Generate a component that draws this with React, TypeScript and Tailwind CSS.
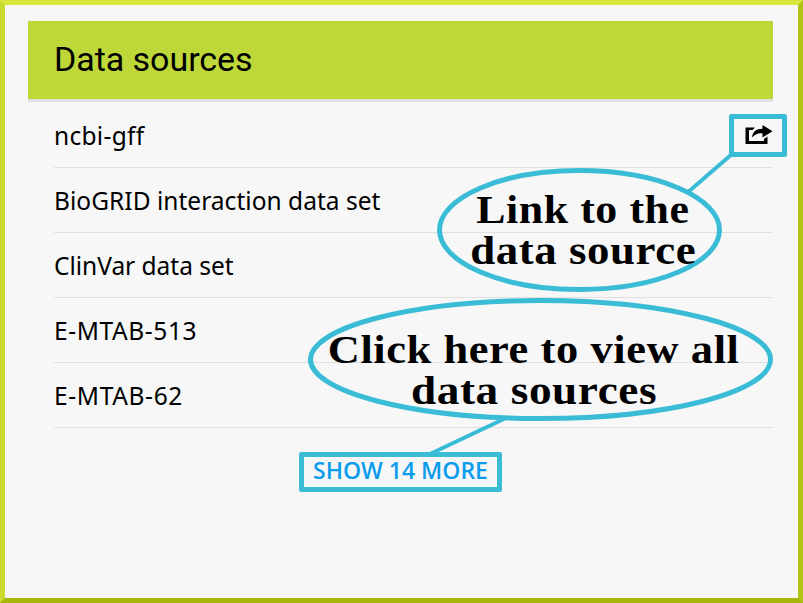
const rows = [
  { name: "ncbi-gff", spacing: "tracking-[0.3px]" },
  { name: "BioGRID interaction data set", spacing: "tracking-[0.03px]" },
  { name: "ClinVar data set", spacing: "tracking-[-0.02px]" },
  { name: "E-MTAB-513", spacing: "tracking-[0.6px]" },
  { name: "E-MTAB-62", spacing: "tracking-[0.65px]" },
];

function ShareIcon() {
  return (
    <svg width="28" height="20" viewBox="0 0 28 20" fill="#000">
      <path d="M0.5 2.5H10L7.5 5H4V16H19V14L22.5 11.5V19H0.5Z" />
      <path d="M7 12.5C7.5 7 11 3.8 17.5 3.8V0L27.5 6.2L17.5 12.5V8.5C13 7.8 10 9.5 7 12.5Z" />
    </svg>
  );
}

export default function App() {
  return (
    <div className="relative h-[603px] w-[803px] overflow-hidden border-5 border-t-[#d9e63d] border-r-[#b1c414] border-b-[#a6b60b] border-l-[#cbdb2e] bg-[#f7f7f7] pt-4 pr-[25px] pl-[23px] text-black">
      <header className="flex h-[81px] items-center border-b-3 border-[#e1e1e1] bg-[#bed83a] pb-0.5 pl-[26px] font-['Roboto',sans-serif] text-[34px] tracking-[-0.05px]">
        <h1>Data sources</h1>
      </header>
      <ul className="ml-[26px] font-['Noto_Sans','Open_Sans',sans-serif] text-[24.5px] font-normal">
        {rows.map((row, i) => (
          <li
            key={row.name}
            className={`flex items-center justify-between border-b border-[#e0e0e0] ${i === 0 ? "h-[66px]" : "h-[65px]"}`}
          >
            <span className={`${i === 0 ? "pt-1" : "pt-0.5"} ${row.spacing}`}>{row.name}</span>
            {i === 0 && (
              <button aria-label="Open data source">
                <ShareIcon />
              </button>
            )}
          </li>
        ))}
      </ul>
      <button className="mt-6 ml-[271px] flex h-10 w-[203px] items-center justify-center rounded-xs border-5 border-[#3bbcd6] pb-1 font-['Open_Sans',sans-serif] text-[23px] font-semibold whitespace-nowrap text-[#0a9ced]">
        SHOW 14 MORE
      </button>

      <svg className="pointer-events-none absolute -top-[5px] -left-[5px]" width="803" height="603" fill="none" stroke="#3bbcd6">
        <line x1="732" y1="154" x2="687" y2="193" strokeWidth="4" />
        <line x1="506" y1="418" x2="430" y2="454" strokeWidth="4" />
        <rect x="731.5" y="116.5" width="53" height="38" strokeWidth="5" strokeLinejoin="round" />
        <ellipse cx="579.5" cy="230" rx="140" ry="59.5" strokeWidth="5" />
        <ellipse cx="540.5" cy="359.5" rx="230" ry="59" strokeWidth="5" />
      </svg>
      <p className="absolute top-[184px] left-[464px] flex w-[228px] flex-col items-center font-['Liberation_Serif',serif] text-[39px] leading-[41px] font-bold whitespace-nowrap">
        <span className="scale-x-[1.125] tracking-[0.5px]">Link to the</span>
        <span className="scale-x-[1.15] tracking-[0.5px]">data source</span>
      </p>
      <p className="absolute top-[324px] left-[322px] flex w-[414px] flex-col items-center font-['Liberation_Serif',serif] text-[39px] leading-[41px] font-bold whitespace-nowrap">
        <span className="scale-x-[1.14] tracking-[0.5px]">Click here to view all</span>
        <span className="scale-x-[1.16] tracking-[0.5px]">data sources</span>
      </p>
    </div>
  );
}
